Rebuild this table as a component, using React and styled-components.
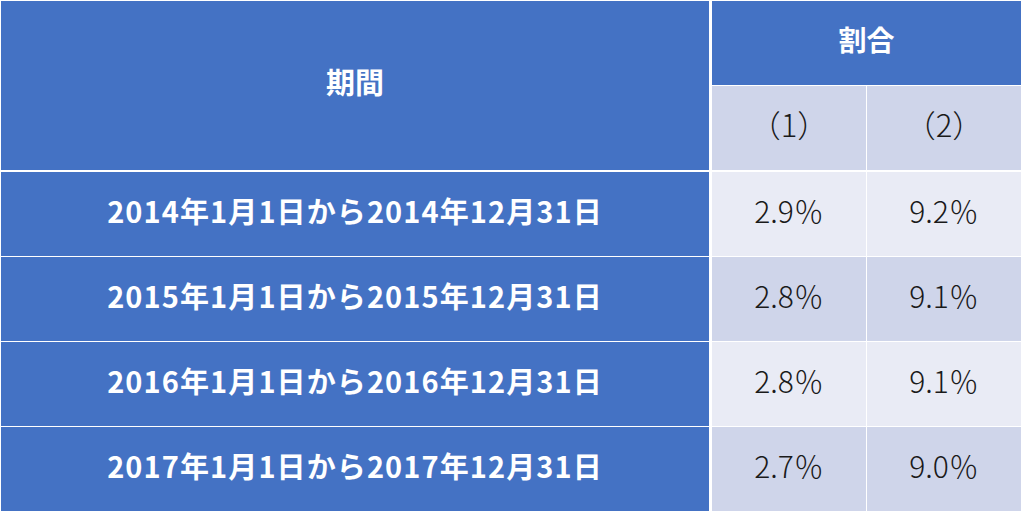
import React from "react";
import styled, { createGlobalStyle } from "styled-components";

const Global = createGlobalStyle`
  html, body { margin: 0; padding: 0; background: #ffffff; }
  body { font-family: "Noto Sans CJK JP", "Noto Sans", sans-serif; }
`;

const Page = styled.div`
  width: 1024px;
  height: 512px;
  padding: 1px 0 0 1px;
  box-sizing: border-box;
`;

const Table = styled.div`
  display: grid;
  grid-template-columns: 708px 157px 155px;
  grid-template-rows: 84px 85px 86px 85px 85px 85px;
  background: #ffffff;
  width: 1020px;
`;

const Cell = styled.div`
  display: flex;
  align-items: center;
  justify-content: center;
  box-sizing: border-box;
  padding-bottom: 9px;
  grid-column: ${(p) => p.$col || "auto"};
  grid-row: ${(p) => p.$row || "auto"};
  background: ${(p) =>
    p.$tone === "blue" ? "#4472c4" : p.$tone === "mid" ? "#cfd5ea" : "#e9ebf5"};
  color: ${(p) => (p.$tone === "blue" ? "#ffffff" : "#1a1a1a")};
  font-weight: ${(p) => (p.$tone === "blue" ? 700 : 300)};
  font-size: ${(p) => p.$size || 30}px;
  letter-spacing: ${(p) => p.$ls || 0}px;
  border-left: ${(p) => p.$bl || 0}px solid #ffffff;
  border-top: ${(p) => p.$bt || 0}px solid #ffffff;
  white-space: nowrap;
`;

const rows = [
  ["2014年1月1日から2014年12月31日", "2.9％", "9.2％"],
  ["2015年1月1日から2015年12月31日", "2.8％", "9.1％"],
  ["2016年1月1日から2016年12月31日", "2.8％", "9.1％"],
  ["2017年1月1日から2017年12月31日", "2.7％", "9.0％"],
];

export default function App() {
  return (
    <>
      <Global />
      <Page>
        <Table>
          <Cell $tone="blue" $col="1" $row="1 / span 2" $size={29}>期間</Cell>
          <Cell $tone="blue" $col="2 / span 2" $row="1" $bl={3} $size={28}>割合</Cell>
          <Cell $tone="mid" $col="2" $row="2" $bl={3} $bt={1} $size={31}>（1）</Cell>
          <Cell $tone="mid" $col="3" $row="2" $bl={1} $bt={1} $size={31}>（2）</Cell>
          {rows.map((r, i) => {
            const tone = i % 2 === 0 ? "light" : "mid";
            const bt = i === 0 ? 2 : 1;
            return (
              <React.Fragment key={i}>
                <Cell $tone="blue" $col="1" $bt={bt} $size={29} $ls={1.1}>{r[0]}</Cell>
                <Cell $tone={tone} $col="2" $bt={bt} $bl={3}>{r[1]}</Cell>
                <Cell $tone={tone} $col="3" $bt={bt} $bl={1}>{r[2]}</Cell>
              </React.Fragment>
            );
          })}
        </Table>
      </Page>
    </>
  );
}
